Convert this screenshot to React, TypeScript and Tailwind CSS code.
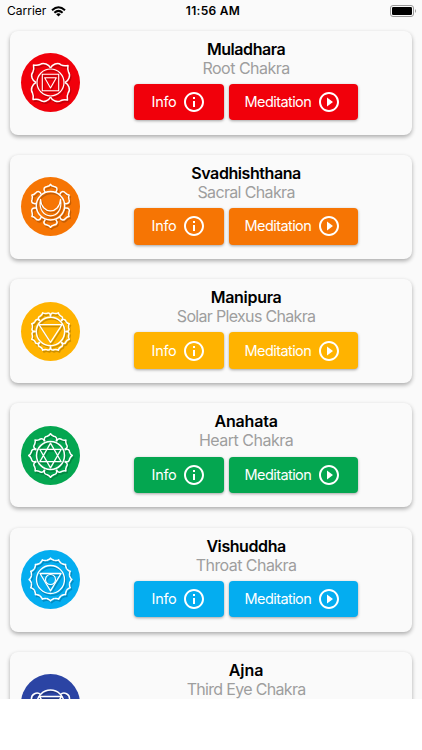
import type { ReactNode } from "react";
import { MdInfoOutline, MdPlayCircleOutline } from "react-icons/md";

const range = (n: number) => Array.from({ length: n }, (_, i) => i);

// Repeats one petal around the centre of the symbol
const Petals = ({ count, d, offset = 0 }: { count: number; d: string; offset?: number }) => (
  <>
    {range(count).map((i) => (
      <path key={i} d={d} transform={`rotate(${offset + (360 / count) * i})`} />
    ))}
  </>
);

const Root = () => (
  <>
    <Petals count={4} d="M0 -14.5C-1.5 -18 -7 -20.5 -10.5 -18Q-13 -16.8 -17 -17.5Q-16.2 -13 -17.6 -10.5C-20.5 -7 -18 -1.5 -14.5 0" />
    <circle r="13.5" strokeWidth="1.2" />
    <path d="M-8.2 -8.2H8.2V8.2H-8.2ZM-5.8 -4.8H5.8L0 5.5Z" strokeWidth="1.1" />
  </>
);

const Sacral = () => (
  <g transform="translate(0 -0.7)">
    <Petals count={6} d="M-5.2 -13.6C-8 -17 -6 -19 -3.5 -19.3Q-1 -19.8 0 -21.5Q1 -19.8 3.5 -19.3C6 -19 8 -17 5.2 -13.6" />
    <circle r="14.2" />
    <path d="M-10 -6.5C-14 15.5 14 15.5 10 -6.5C9 9 -9 9 -10 -6.5Z" strokeWidth="1.2" />
  </g>
);

const Solar = () => (
  <>
    <Petals count={8} offset={22.5} d="M-5.5 -14C-7.5 -16.5 -5.5 -18.5 -3.5 -18.2Q-1.2 -18.4 0 -20.3Q1.2 -18.4 3.5 -18.2C5.5 -18.5 7.5 -16.5 5.5 -14" />
    <circle r="14.2" />
    <path d="M-11.5 -6.8H11.5L0 10.8Z" strokeWidth="1.3" />
  </>
);

const Heart = () => (
  <>
    <Petals count={8} d="M-5.6 -14.3C-7.5 -17.5 -5 -19 -3.2 -19.2Q-1 -20 0 -21.8Q1 -20 3.2 -19.2C5 -19 7.5 -17.5 5.6 -14.3" />
    <circle r="14" />
    <path d="M0 -12.4L10.7 6.2H-10.7ZM0 12.4L10.7 -6.2H-10.7Z" strokeWidth="1.3" />
  </>
);

const Throat = () => (
  <>
    <Petals count={16} d="M-3.75 -18.8C-2.8 -19.9 -1 -19.6 0 -21.4C1 -19.6 2.8 -19.9 3.75 -18.8" />
    <circle r="14" strokeWidth="1.3" />
    <path d="M-10.5 -6H10.5L0 11.4Z" strokeWidth="1.3" />
    <circle r="5" strokeWidth="1.1" />
  </>
);

const ThirdEye = () => (
  <>
    <circle r="13.5" />
    <path d="M-10 -9C-13 -12 -20 -10 -19 -3C-19 3 -15 10 -10 9M10 -9C13 -12 20 -10 19 -3C19 3 15 10 10 9M-11 -7H11L0 11Z" />
  </>
);

type Chakra = {
  name: string;
  nameClass: string;
  title: string;
  titleClass: string;
  color: string;
  symbol: ReactNode;
};

const chakras: Chakra[] = [
  { name: "Muladhara", nameClass: "tracking-[-0.45px]", title: "Root Chakra", titleClass: "tracking-[-0.5px]", color: "bg-[#f1000b]", symbol: <Root /> },
  { name: "Svadhishthana", nameClass: "tracking-[-0.42px]", title: "Sacral Chakra", titleClass: "tracking-[-0.65px]", color: "bg-[#f67504]", symbol: <Sacral /> },
  { name: "Manipura", nameClass: "tracking-[-0.3px]", title: "Solar Plexus Chakra", titleClass: "tracking-[-0.68px]", color: "bg-[#ffb300]", symbol: <Solar /> },
  { name: "Anahata", nameClass: "tracking-[-0.2px]", title: "Heart Chakra", titleClass: "tracking-[-0.5px]", color: "bg-[#04a650]", symbol: <Heart /> },
  { name: "Vishuddha", nameClass: "tracking-[-0.42px]", title: "Throat Chakra", titleClass: "tracking-[-0.55px]", color: "bg-[#04adf0]", symbol: <Throat /> },
];

const StatusBar = () => (
  <header className="grid h-[22px] shrink-0 grid-cols-3 items-center pl-[7px] pr-[5px] text-black">
    <div className="flex items-center gap-[5px]">
      <span className="text-[12px]">Carrier</span>
      <svg viewBox="0 0 15 11" className="h-[11px] w-[15px]" fill="none" stroke="black" strokeWidth="2">
        <path d="M1 4.2Q7.5 -1.8 14 4.2M3.4 6.7Q7.5 3 11.6 6.7" />
        <path d="M5.2 8.2Q7.5 6.3 9.8 8.2L7.5 10.6Z" fill="black" stroke="none" />
      </svg>
    </div>
    <span className="pl-[2px] text-center text-[12px] font-semibold tracking-[0.3px]">11:56 AM</span>
    <svg viewBox="0 0 27 12" className="h-3 w-[27px] justify-self-end">
      <rect x="0.5" y="0.5" width="23" height="11" rx="2.5" fill="none" stroke="#999" />
      <rect x="2" y="2" width="20" height="8" rx="1.3" />
      <path d="M25 4Q27 6 25 8Z" fill="#999" />
    </svg>
  </header>
);

const Actions = ({ color }: { color: string }) => (
  <div className="mt-[6.2px] flex gap-[5px] text-[14.5px] text-white">
    <button className={`flex h-[36.5px] w-[89.5px] items-center justify-between rounded-[4px] pr-[18px] pl-[17.5px] shadow-[0_1px_3px_rgba(0,0,0,0.35)] ${color}`}>
      <span className="tracking-[-0.3px]">Info</span>
      <MdInfoOutline className="size-6" />
    </button>
    <button className={`flex h-[36.5px] w-[129.5px] items-center justify-between rounded-[4px] pr-[17px] pl-4 shadow-[0_1px_3px_rgba(0,0,0,0.35)] ${color}`}>
      <span className="tracking-[-0.58px]">Meditation</span>
      <MdPlayCircleOutline className="size-6" />
    </button>
  </div>
);

const ChakraCard = ({ name, nameClass, title, titleClass, color, symbol, children }: Chakra & { children?: ReactNode }) => (
  <article className="flex h-[104px] shrink-0 rounded-[8px] bg-[#fafafa] pl-[10.4px] shadow-[0_2px_4px_rgba(0,0,0,0.32)]">
    <div className={`mt-[22.5px] size-[59px] shrink-0 rounded-full ${color}`}>
      <svg viewBox="-29.5 -29.5 59 59" className="size-full" fill="none" stroke="white" strokeWidth="1.5" strokeLinejoin="round">
        <g className="opacity-20" stroke="black" transform="translate(1.2 1.8)">{symbol}</g>
        {symbol}
      </svg>
    </div>
    <div className="flex flex-1 flex-col items-center pt-[9px] pl-[0.8px]">
      <h2 className={`text-[16px] leading-[19px] font-semibold text-black ${nameClass}`}>{name}</h2>
      <p className={`text-[16px] leading-[19px] text-[#9e9e9e] ${titleClass}`}>{title}</p>
      {children}
    </div>
  </article>
);

export default function App() {
  return (
    <div className="h-[750px] w-[422px] overflow-hidden bg-white font-[Inter,sans-serif]">
      <main className="flex h-[699px] flex-col overflow-hidden bg-[#fafafa]">
        <StatusBar />
        <section className="flex flex-col gap-[20.25px] px-[10.4px] pt-[8.6px]">
          {chakras.map((chakra) => (
            <ChakraCard key={chakra.name} {...chakra}>
              <Actions color={chakra.color} />
            </ChakraCard>
          ))}
          <ChakraCard name="Ajna" nameClass="" title="Third Eye Chakra" titleClass="tracking-[-0.68px]" color="bg-[#2b44a4]" symbol={<ThirdEye />} />
        </section>
      </main>
    </div>
  );
}
